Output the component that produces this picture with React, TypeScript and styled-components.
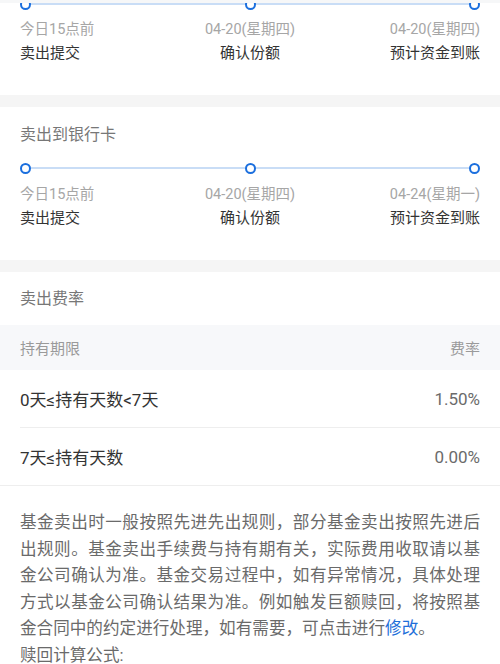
import React from "react";
import styled, { createGlobalStyle } from "styled-components";

const Global = createGlobalStyle`
  html, body { margin: 0; padding: 0; background: #f5f5f5; }
  body { font-family: Roboto, "Noto Sans CJK SC", "Noto Sans", sans-serif; -webkit-font-smoothing: antialiased; }
  * { box-sizing: border-box; }
`;

const Page = styled.div`
  width: 500px;
  height: 664px;
  overflow: hidden;
  background: #f5f5f5;
  display: flex;
  flex-direction: column;
  gap: 12px;
  & > * { flex-shrink: 0; }
`;

const Card = styled.section<{ $pt?: number; $pb?: number }>`
  background: #fff;
  padding: ${(p) => p.$pt ?? 16}px 20px ${(p) => p.$pb ?? 31}px;
  overflow: hidden;
`;

const TopStrip = styled.div`
  height: 3px;
  background: #f6f7f8;
  margin-bottom: -12px;
  position: relative;
  z-index: 1;
`;

const SectionTitle = styled.h3`
  margin: 0;
  font-size: 16px;
  line-height: 24px;
  font-weight: 400;
  color: #777;
`;

const DotRow = styled.div<{ $mt: number; $mb: number }>`
  position: relative;
  height: 12px;
  display: flex;
  justify-content: space-between;
  align-items: center;
  margin: ${(p) => p.$mt}px 0 ${(p) => p.$mb}px;
  &::before {
    content: "";
    position: absolute;
    left: 5px;
    right: 5px;
    top: 5px;
    height: 2px;
    background: #c9ddf6;
  }
`;

const Dot = styled.span`
  position: relative;
  width: 11px;
  height: 11px;
  border-radius: 50%;
  border: 2.5px solid #1b6fde;
  background: #fff;
`;

const Steps = styled.div`
  display: grid;
  grid-template-columns: 1fr 1fr 1fr;
`;

const Step = styled.div<{ $align: "left" | "center" | "right" }>`
  text-align: ${(p) => p.$align};
  white-space: nowrap;
`;

const StepDate = styled.div`
  font-size: 14.5px;
  line-height: 20px;
  color: #a6a6a6;
`;

const StepLabel = styled.div`
  margin-top: 2px;
  font-size: 15px;
  line-height: 22px;
  color: #333;
`;

const FeeCard = styled.section`
  background: #fff;
  display: flex;
  flex-direction: column;
`;

const FeeTitle = styled.div`
  padding: 15px 20px 14px;
  font-size: 16px;
  line-height: 24px;
  color: #777;
`;

const HeadRow = styled.div`
  height: 45px;
  padding: 0 20px;
  background: #f7f8fa;
  display: flex;
  justify-content: space-between;
  align-items: center;
  font-size: 15px;
  color: #9a9a9a;
`;

const FeeRow = styled.div<{ $full?: boolean }>`
  height: 58px;
  margin-left: ${(p) => (p.$full ? 0 : 20)}px;
  padding: 0 20px 0 ${(p) => (p.$full ? 20 : 0)}px;
  display: flex;
  justify-content: space-between;
  align-items: center;
  border-bottom: 1px solid #eeeeee;
`;

const Period = styled.span`
  font-size: 17px;
  color: #333;
`;

const Rate = styled.span`
  font-size: 17px;
  color: #6b6b6b;
`;

const Notes = styled.div`
  background: #fff;
  padding: 24px 20px 0;
`;

const Para = styled.p`
  margin: 0;
  font-size: 16.6px;
  line-height: 26.5px;
  color: #6a6a6a;
  text-align: justify;
`;

const Link = styled.span`
  color: #1e6fd9;
`;

type StepData = { date: string; label: string };

const Timeline: React.FC<{ steps: StepData[]; mt: number; mb: number }> = ({ steps, mt, mb }) => {
  const aligns: ("left" | "center" | "right")[] = ["left", "center", "right"];
  return (
    <>
      <DotRow $mt={mt} $mb={mb}>
        {steps.map((_, i) => (
          <Dot key={i} />
        ))}
      </DotRow>
      <Steps>
        {steps.map((s, i) => (
          <Step key={i} $align={aligns[i]}>
            <StepDate>{s.date}</StepDate>
            <StepLabel>{s.label}</StepLabel>
          </Step>
        ))}
      </Steps>
    </>
  );
};

export default function App() {
  return (
    <>
      <Global />
      <Page>
        <TopStrip />
        <Card $pt={0}>
          <Timeline
            mt={-5}
            mb={10}
            steps={[
              { date: "今日15点前", label: "卖出提交" },
              { date: "04-20(星期四)", label: "确认份额" },
              { date: "04-20(星期四)", label: "预计资金到账" },
            ]}
          />
        </Card>
        <Card>
          <SectionTitle>卖出到银行卡</SectionTitle>
          <Timeline
            mt={15}
            mb={11}
            steps={[
              { date: "今日15点前", label: "卖出提交" },
              { date: "04-20(星期四)", label: "确认份额" },
              { date: "04-24(星期一)", label: "预计资金到账" },
            ]}
          />
        </Card>
        <FeeCard>
          <FeeTitle>卖出费率</FeeTitle>
          <HeadRow>
            <span>持有期限</span>
            <span>费率</span>
          </HeadRow>
          <FeeRow>
            <Period>0天≤持有天数&lt;7天</Period>
            <Rate>1.50%</Rate>
          </FeeRow>
          <FeeRow $full>
            <Period>7天≤持有天数</Period>
            <Rate>0.00%</Rate>
          </FeeRow>
          <Notes>
            <Para>
              基金卖出时一般按照先进先出规则，部分基金卖出按照先进后出规则。基金卖出手续费与持有期有关，实际费用收取请以基金公司确认为准。基金交易过程中，如有异常情况，具体处理方式以基金公司确认结果为准。例如触发巨额赎回，将按照基金合同中的约定进行处理，如有需要，可点击进行
              <Link>修改</Link>。
            </Para>
            <Para>赎回计算公式:</Para>
          </Notes>
        </FeeCard>
      </Page>
    </>
  );
}
